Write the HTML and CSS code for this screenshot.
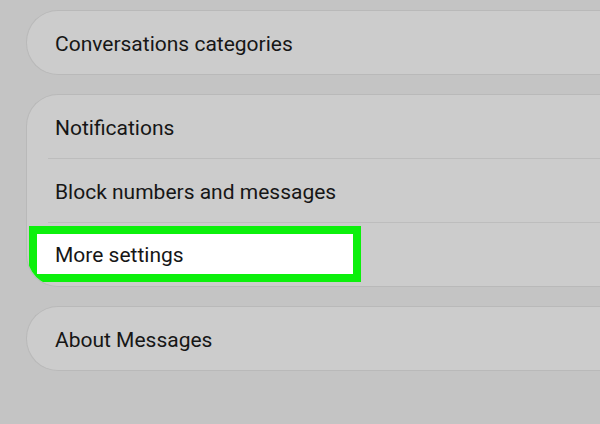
FILE: index.html
```html
<!DOCTYPE html>
<html>
<head>
<meta charset="utf-8">
<link rel="stylesheet" href="styles.css">
</head>
<body>
<div class="screen">
  <div class="card">
    <div class="row">Conversations categories</div>
  </div>
  <div class="card">
    <div class="row">Notifications</div>
    <div class="row divided">Block numbers and messages</div>
    <div class="row divided highlighted">
      <div class="highlight">More settings</div>
    </div>
  </div>
  <div class="card">
    <div class="row">About Messages</div>
  </div>
</div>
</body>
</html>
```
FILE: styles.css
```css
html, body {
  margin: 0;
  padding: 0;
  background: #c4c4c4;
}
body {
  width: 600px;
  height: 424px;
  overflow: hidden;
  font-family: Roboto, "Open Sans", sans-serif;
}
.screen {
  display: flex;
  flex-direction: column;
  gap: 19px;
  padding: 10px 0 0 26px;
}
.card {
  background: #cccccc;
  border: 1px solid #b9b9b9;
  border-right: none;
  border-radius: 32px 0 0 32px;
  overflow: hidden;
}
.row {
  height: 63px;
  display: flex;
  align-items: center;
  padding-left: 28px;
  padding-top: 2px;
  box-sizing: border-box;
  font-size: 21px;
  color: #161616;
  position: relative;
}
.row.divided {
  height: 64px;
  padding-top: 3px;
}
.row.divided::before {
  content: "";
  position: absolute;
  top: 0;
  left: 21px;
  right: 0;
  height: 1px;
  background: #bdbdbd;
}
.row.highlighted {
  padding-left: 2px;
  padding-top: 0;
  align-items: flex-start;
}
.highlight {
  margin-top: 4px;
  width: 332px;
  height: 56px;
  box-sizing: border-box;
  border: 8px solid #0cf00c;
  background: #ffffff;
  padding-left: 18px;
  padding-top: 2px;
  display: flex;
  align-items: center;
}
```
